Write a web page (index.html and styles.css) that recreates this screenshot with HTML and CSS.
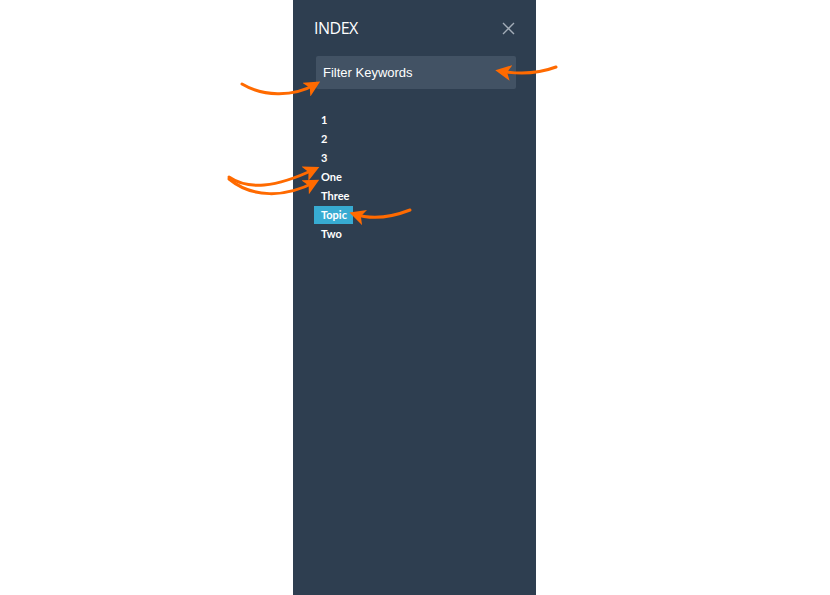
FILE: index.html
```html
<!DOCTYPE html>
<html>
<head>
<meta charset="utf-8">
<link rel="stylesheet" href="styles.css">
</head>
<body>
<div class="page">
  <aside class="panel">
    <header class="head">
      <h1 class="title">INDEX</h1>
      <button class="close" aria-label="Close">
        <svg width="13" height="13" viewBox="0 0 13 13"><path d="M1 1L12 12M12 1L1 12" stroke="#a3adb8" stroke-width="1.4" fill="none"/></svg>
      </button>
    </header>
    <div class="search">Filter Keywords</div>
    <ul class="list">
      <li><span class="item">1</span></li>
      <li><span class="item">2</span></li>
      <li><span class="item">3</span></li>
      <li><span class="item">One</span></li>
      <li><span class="item">Three</span></li>
      <li><span class="item active">Topic</span></li>
      <li><span class="item">Two</span></li>
    </ul>
  </aside>
  <svg class="annot" width="830" height="595" viewBox="0 0 830 595">
    <defs>
      <marker id="ah" markerUnits="userSpaceOnUse" markerWidth="16" markerHeight="16" viewBox="0 0 10 10" refX="7" refY="5" orient="auto">
        <path d="M0,0 L10,5 L0,10 L2.5,5 Z" fill="#ff6a00"/>
      </marker>
    </defs>
    <g stroke="#ff6a00" stroke-width="3" fill="none" stroke-linecap="round" marker-end="url(#ah)">
      <path d="M242,84 C262,96 292,98 316,84"/>
      <path d="M556,67 C540,73 522,75 500,71"/>
      <path d="M229,177 C248,190 275,188 315,169"/>
      <path d="M229,179 C252,198 285,198 315,182"/>
      <path d="M410,210 C392,217 372,220 354,214"/>
    </g>
  </svg>
</div>
</body>
</html>
```
FILE: styles.css
```css
html, body {
  margin: 0;
  padding: 0;
  background: #ffffff;
}
.page {
  position: relative;
  width: 830px;
  height: 595px;
  box-sizing: border-box;
  padding-left: 293px;
  display: flex;
  overflow: hidden;
}
.panel {
  width: 243px;
  height: 595px;
  background: #2e3e50;
  box-sizing: border-box;
  padding: 16px 20px 0 21px;
  display: flex;
  flex-direction: column;
}
.head {
  display: flex;
  justify-content: space-between;
  align-items: center;
  height: 24px;
}
.title {
  margin: 0;
  font-family: "Open Sans", sans-serif;
  font-weight: 400;
  font-size: 16px;
  color: #ffffff;
  letter-spacing: -0.5px;
}
.close {
  background: none;
  border: 0;
  padding: 0;
  margin-right: 1px;
  width: 13px;
  height: 13px;
  display: flex;
}
.search {
  margin: 16px 0 0 2px;
  width: 200px;
  height: 33px;
  box-sizing: border-box;
  background: #425264;
  border-radius: 2px;
  padding: 0 7px;
  display: flex;
  align-items: center;
  font-family: "Liberation Sans", Arial, sans-serif;
  font-size: 13px;
  color: #ffffff;
}
.list {
  list-style: none;
  margin: 21px 0 0 0;
  padding: 0;
  font-family: Lato, "Open Sans", sans-serif;
  font-weight: 700;
  font-size: 11px;
  color: #ffffff;
}
.list li {
  height: 19px;
  display: flex;
  align-items: center;
}
.item {
  display: inline-block;
  padding: 0 7px;
  line-height: 18px;
}
.item.active {
  background: #37abd2;
  padding: 0 6px 0 7px;
}
.annot {
  position: absolute;
  left: 0;
  top: 0;
  pointer-events: none;
}
```
